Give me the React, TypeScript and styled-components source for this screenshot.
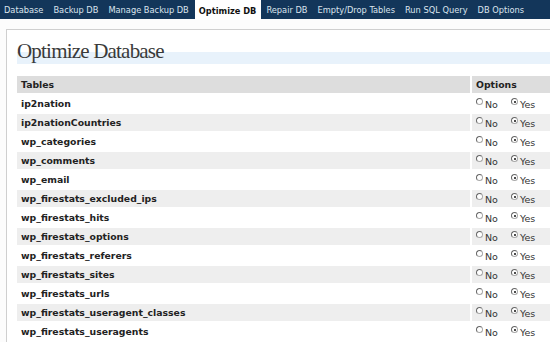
import React from "react";
import styled, { createGlobalStyle } from "styled-components";

const tabs = [
  "Database",
  "Backup DB",
  "Manage Backup DB",
  "Optimize DB",
  "Repair DB",
  "Empty/Drop Tables",
  "Run SQL Query",
  "DB Options",
];

const tables = [
  "ip2nation",
  "ip2nationCountries",
  "wp_categories",
  "wp_comments",
  "wp_email",
  "wp_firestats_excluded_ips",
  "wp_firestats_hits",
  "wp_firestats_options",
  "wp_firestats_referers",
  "wp_firestats_sites",
  "wp_firestats_urls",
  "wp_firestats_useragent_classes",
  "wp_firestats_useragents",
];

export default function App() {
  return (
    <>
      <GlobalStyle />
      <NavBar>
        {tabs.map((t) => (
          <Tab key={t} $active={t === "Optimize DB"}>
            {t}
          </Tab>
        ))}
      </NavBar>
      <Page>
        <Panel>
          <Heading>Optimize Database</Heading>
          <Table>
            <thead>
              <Row $shade="head">
                <Th>Tables</Th>
                <ThOptions>Options</ThOptions>
              </Row>
            </thead>
            <tbody>
              {tables.map((name, i) => (
                <Row key={name} $shade={i % 2 === 1 ? "alt" : "plain"}>
                  <NameCell>{name}</NameCell>
                  <OptionCell>
                    <Choice>
                      <Radio type="radio" name={name} readOnly />
                      No
                    </Choice>
                    <Choice>
                      <Radio type="radio" name={name} defaultChecked />
                      Yes
                    </Choice>
                  </OptionCell>
                </Row>
              ))}
            </tbody>
          </Table>
        </Panel>
      </Page>
    </>
  );
}

const GlobalStyle = createGlobalStyle`
  body {
    margin: 0;
    background: #ffffff;
    font-family: "DejaVu Sans", Verdana, sans-serif;
    overflow: hidden;
  }
`;

const NavBar = styled.div`
  display: flex;
  height: 19px;
  background: #13365a;
`;

const Tab = styled.div<{ $active?: boolean }>`
  display: flex;
  align-items: center;
  padding: 0 5px 0 4px;
  margin-right: 1px;
  height: ${(p) => (p.$active ? "20px" : "19px")};
  font-family: "DejaVu Sans Condensed", "DejaVu Sans", sans-serif;
  font-size: 9.2px;
  font-weight: ${(p) => (p.$active ? "bold" : "normal")};
  color: ${(p) => (p.$active ? "#111111" : "#dbe4ee")};
  background: ${(p) => (p.$active ? "#ffffff" : "transparent")};
  white-space: nowrap;
`;

const Page = styled.div`
  padding: 10px 0 0 6px;
  background: #fcfcfc;
`;

const Panel = styled.div`
  border-left: 1px solid #cfcfcf;
  border-top: 1px solid #cfcfcf;
  background: #ffffff;
  padding: 9px 0 0 10px;
`;

const Heading = styled.h2`
  margin: 0;
  height: 25px;
  font-family: "Liberation Serif", "DejaVu Serif", serif;
  font-weight: normal;
  font-size: 21px;
  letter-spacing: -0.8px;
  line-height: 25px;
  color: #3a3a3a;
  background: linear-gradient(to bottom, transparent 0, transparent 52%, #e8f2fb 52%, #e8f2fb 100%);
`;

const Table = styled.table`
  margin-top: 10px;
  width: 100%;
  border-spacing: 0 2px;
  border-collapse: separate;
  font-size: 9.3px;
`;

const shades = { head: "#dddddd", alt: "#eeeeee", plain: "#ffffff" };

const Row = styled.tr<{ $shade: "head" | "alt" | "plain" }>`
  height: 17px;
  background: ${(p) => shades[p.$shade]};
`;

const Th = styled.th`
  text-align: left;
  padding: 0 4px;
  font-weight: bold;
  color: #222222;
`;

const ThOptions = styled(Th)`
  width: 70px;
  border-left: 2px solid #ffffff;
`;

const NameCell = styled.td`
  padding: 0 4px;
  font-weight: bold;
  color: #222222;
  white-space: nowrap;
`;

const OptionCell = styled.td`
  padding: 0 0 0 4px;
  border-left: 2px solid #ffffff;
  white-space: nowrap;
  color: #333333;
  font-size: 9.5px;
`;

const Choice = styled.label`
  display: inline-flex;
  align-items: flex-start;
  margin-right: 13px;
  line-height: 14px;
  padding-top: 2px;
`;

const Radio = styled.input`
  appearance: none;
  width: 7px;
  height: 7px;
  margin: 0 2px 0 0;
  border-radius: 50%;
  border: 1px solid #a8a8a8;
  border-top-color: #666666;
  border-left-color: #666666;
  background: #ffffff;
  position: relative;
  &:checked::after {
    content: "";
    position: absolute;
    left: 2px;
    top: 2px;
    width: 2px;
    height: 2px;
    border-radius: 50%;
    background: #111111;
  }
`;
